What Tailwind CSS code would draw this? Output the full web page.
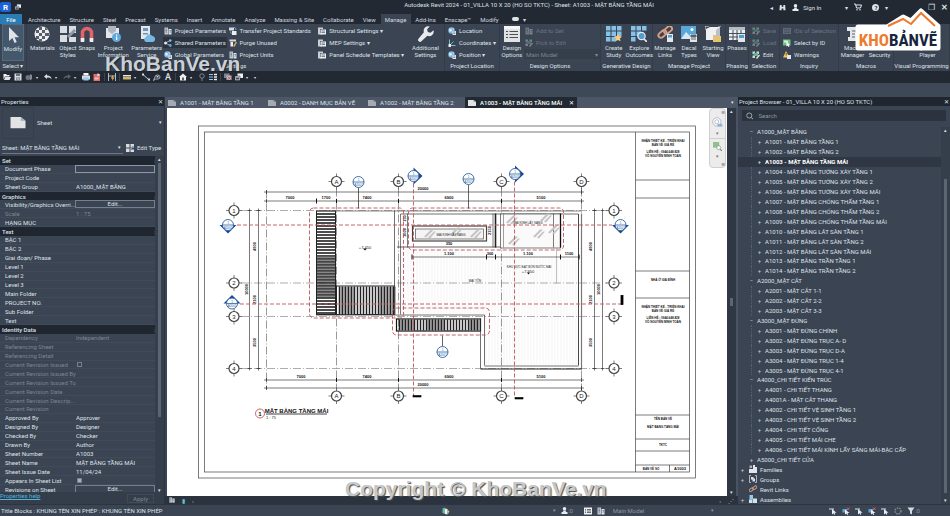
<!DOCTYPE html>
<html lang="vi">
<head>
<meta charset="utf-8">
<title>Autodesk Revit 2024</title>
<script src="https://cdn.jsdelivr.net/npm/@tailwindcss/browser@4"></script>
</head>
<body class="relative flex h-screen flex-col overflow-hidden bg-[#3b4453] font-[Roboto,'Noto_Sans',sans-serif] text-[6px] leading-[7px] text-[#dde1e7]">

<svg class="hidden" xmlns="http://www.w3.org/2000/svg">
  <symbol id="cursor" viewBox="0 0 16 16"><path d="M4 0v14l3.400-3 2.200 5 2.200-1-2.200-4.800H14z" fill="#dfe3e8"/></symbol>
  <symbol id="materials" viewBox="0 0 16 16"><circle cx="8" cy="8" r="7.500" fill="#eceef0"/><path d="M5 1h3v3H5zM11 1l3 3h-3zM2 4h3v3H2zM8 4h3v3H8zM5 7h3v3H5zM11 7h4v3h-4zM2 10h3v3H2zM8 10h3v3H8zM5 13h3v2.500H5z" fill="#565e69"/></symbol>
  <symbol id="styles" viewBox="0 0 16 16"><path d="M0 0h7v7H0zM9 0h7v7H9zM0 9h7v7H0zM9 11h7v5H9z" fill="#d9dde2"/><path d="M7 10l7-7 2 2-7 7z" fill="#8f98a4"/></symbol>
  <symbol id="magnet" viewBox="0 0 16 16"><path d="M3.500 15V7a4.500 4.500 0 0 1 9 0v8" fill="none" stroke="#e2636a" stroke-width="3.600"/><path d="M1.700 12h3.600v4H1.700zM10.700 12h3.600v4h-3.600z" fill="#eceef0"/></symbol>
  <symbol id="info" viewBox="0 0 16 16"><path d="M1 2h13v10H1z" fill="#e4e6ea"/><path d="M3 0h8v5l-4 3-4-3z" fill="#aeb5be"/><circle cx="11.500" cy="11.500" r="4.500" fill="#62a9dc"/><path d="M11 8.500h1.200v1.300H11zM11 10.500h1.200V14H11z" fill="#fff"/></symbol>
  <symbol id="service" viewBox="0 0 16 16"><path d="M2 0h9v13H2z" fill="#e4e6ea"/><path d="M4 2h5v3H4zM4 7h5v1.500H4z" fill="#6896bd"/><path d="M7 16a2.600 2.600 0 0 1 0-5 3.300 3.300 0 0 1 6-1.200A3.200 3.200 0 0 1 14 16z" fill="#78b7e2"/></symbol>
  <symbol id="doc" viewBox="0 0 16 16"><path d="M1 1h7v14H1z" fill="#c3c9d1"/><path d="M9 4h6v11H9z" fill="#e4e6ea"/><path d="M3 4h3M3 7h3M3 10h3M11 7h3M11 10h3" stroke="#5a6370" stroke-width="1.500"/></symbol>
  <symbol id="share" viewBox="0 0 16 16"><path d="M3 8l9-5M3 8l9 5" stroke="#cfd4da" stroke-width="1.500"/><circle cx="3" cy="8" r="3" fill="#e4e6ea"/><circle cx="12.500" cy="3" r="2.500" fill="#8bc2e6"/><circle cx="12.500" cy="13" r="2.800" fill="#5aa6d8"/></symbol>
  <symbol id="globe" viewBox="0 0 16 16"><circle cx="7" cy="7" r="6.500" fill="#79b8e3"/><path d="M3 3l4 1 1 4-4 2-2-3zM9 2l3 2-2 2z" fill="#dcebf5"/><path d="M9 8h7v8H9z" fill="#e4e6ea"/><path d="M10.500 10h4M10.500 13h4" stroke="#5a6370" stroke-width="1.300"/></symbol>
  <symbol id="transfer" viewBox="0 0 16 16"><path d="M0 1h10v6H0z" fill="#d5d9df"/><path d="M6 8h9v8H6z" fill="#eceef0"/><path d="M9 1c4 0 5 2 5 5M3 9c0 3 1 4 3 4" stroke="#79b8e3" stroke-width="1.800" fill="none"/></symbol>
  <symbol id="purge" viewBox="0 0 16 16"><path d="M1 1h13v4H1z" fill="#d5d9df"/><path d="M3 6h5v9H3z" fill="#eceef0"/><path d="M8 14l6-9 2 2-5 9z" fill="#d9a35f"/></symbol>
  <symbol id="struct" viewBox="0 0 16 16"><path d="M0 1h10v3H0zM0 12h8v3H0zM0 4h4v8H0z" fill="#c9ced6"/><path d="M5 5h11v10H5z" fill="#eceef0"/><path d="M7 8h7M7 11h7" stroke="#4b5461" stroke-width="1.400"/></symbol>
  <symbol id="wrench" viewBox="0 0 16 16"><path d="M15.500 4.200l-3 2.500-2.700-.6-.7-2.800L11.700.5a4.600 4.600 0 0 0-5.800 5.800L.7 12.600a1.900 1.900 0 0 0 2.700 2.700l6-5.500a4.600 4.600 0 0 0 6.100-5.600z" fill="#e8eaed"/></symbol>
  <symbol id="axes" viewBox="0 0 16 16"><path d="M3 1v12h12" stroke="#78b7e2" stroke-width="2" fill="none"/><path d="M3 13l8-8" stroke="#6ec58b" stroke-width="2"/><path d="M1 10h5v6H1z" fill="#eceef0"/></symbol>
  <symbol id="options" viewBox="0 0 16 16"><path d="M0 0h16v16H0z" fill="#e2e3e3"/><path d="M0 0h16v3H0z" fill="#f6f6f4"/><path d="M2 5.500h2M2 8.500h2M2 11.500h2M5.500 5.500H14M5.500 8.500H14M5.500 11.500H14" stroke="#454e5a" stroke-width="1.200"/></symbol>
  <symbol id="study" viewBox="0 0 16 16"><path d="M0 0h4.500v4.500H0zM5.500 0H10v4.500H5.500zM11 0h4.500v4.500H11zM0 5.500h4.500V10H0zM5.500 5.500H10V10H5.500zM11 5.500h4.500V10H11zM0 11h4.500v4.500H0zM5.500 11H10v4.500H5.500z" fill="#86c1ea"/><path d="M12 7.500l1.200 2.600 2.800.4-2 1.900.5 2.900-2.500-1.400-2.500 1.400.5-2.900-2-1.900 2.800-.4z" fill="#f2cf84"/></symbol>
  <symbol id="explore" viewBox="0 0 16 16"><path d="M0 0h4.500v4.500H0zM5.500 0H10v4.500H5.500zM11 0h4.500v4.500H11zM0 5.500h4.500V10H0zM5.500 5.500H10V10H5.500zM0 11h4.500v4.500H0z" fill="#86c1ea"/><circle cx="10.500" cy="10" r="3.700" fill="#4f9ed1" stroke="#e8eaed" stroke-width="1.200"/><path d="M13 13l3 3" stroke="#e8eaed" stroke-width="1.700"/></symbol>
  <symbol id="links" viewBox="0 0 16 16"><g fill="none" stroke="#d8a184" stroke-width="1.900"><rect x="1" y="5.500" width="9" height="5" rx="2.500" transform="rotate(-40 5.500 8)"/><rect x="6.500" y="1.500" width="9" height="5" rx="2.500" transform="rotate(-40 11 4)"/></g><path d="M10 8h6v8h-6z" fill="#e4e6ea"/><path d="M11 9h4v2.500h-4z" fill="#4f9ed1"/></symbol>
  <symbol id="chain" viewBox="0 0 16 16"><g fill="none" stroke="#c9a184" stroke-width="1.900"><rect x="0" y="7" width="9" height="5" rx="2.500" transform="rotate(-35 4.500 9.500)"/><rect x="7" y="3" width="9" height="5" rx="2.500" transform="rotate(-35 11.500 5.500)"/></g></symbol>
  <symbol id="decal" viewBox="0 0 16 16"><path d="M0 0h15v13H0z" fill="#58a8dc"/><path d="M0 13l5-7 4 4 2-2 4 5z" fill="#d5e7f3"/><circle cx="11" cy="3.500" r="1.500" fill="#fff"/><path d="M9 8h7v8H9z" fill="#e4e6ea"/><path d="M10 9h5v2h-5zM10 13h5" fill="#5a6370" stroke="#5a6370"/></symbol>
  <symbol id="start" viewBox="0 0 16 16"><path d="M1 3l4-2h10v10l-4 3H1z" fill="#f0f1f2"/><path d="M11 4l4-3v10l-4 3z" fill="#b9c0c8"/><path d="M0 0h4M0 0v4M16 0h-3" stroke="#dfe3e8"/><path d="M8 9h3l1 1h4v6H8z" fill="#e5c374"/></symbol>
  <symbol id="phases" viewBox="0 0 16 16"><path d="M0 1h16v13H0z" fill="#eceef0"/><path d="M0 1h16v3H0z" fill="#b4bbc4"/><path d="M0 7.500h16M0 11h16M4 4v10M8 4v10M12 4v10" stroke="#454e5a"/><path d="M9 8h7v8H9z" fill="#e4e6ea"/><path d="M10 9h5v3h-5z" fill="#4f9ed1"/></symbol>
  <symbol id="scroll" viewBox="0 0 16 16"><path d="M2 1h12v4h-2v10H3v-4h2V5H2z" fill="#e4e6ea"/><path d="M7 5h4M7 8h3M7 11h3" stroke="#5a6370"/></symbol>
  <symbol id="play" viewBox="0 0 16 16"><path d="M0 2h14v12H0z" fill="#4fbf77"/><path d="M5 5l6 3-6 3z" fill="#fff"/></symbol>
  <symbol id="ids" viewBox="0 0 16 16"><path d="M0 2h16v12H0z" fill="#9aa1ab"/><path d="M2 5h12M2 8h12M2 11h12" stroke="#3b4453"/></symbol>
  <symbol id="selid" viewBox="0 0 16 16"><path d="M0 1h15v12H0z" fill="#6fc283"/><path d="M2 3h8v4H2z" fill="#d9efdd"/><path d="M7 5v10l2.500-2 1.500 3 2-1-1.500-3H14z" fill="#fff"/></symbol>
  <symbol id="warn" viewBox="0 0 16 16"><path d="M6 0l7 13H0z" fill="#f0c95c"/><path d="M5.500 4h1.500v5H5.500z" fill="#4b3a12"/><path d="M8 8h8v8H8z" fill="#e4e6ea"/></symbol>
  <symbol id="edit" viewBox="0 0 16 16"><path d="M1 1h5v5H1zM9 1h5v5H9zM1 9h5v5H1z" fill="#d5d9df"/><path d="M3 4h9v6H3z" fill="#5fb98a"/><path d="M8 14l6-7 2 2-6 7z" fill="#e8eaed"/></symbol>
  <symbol id="open" viewBox="0 0 16 16"><path d="M1 2h5l2 2h5v3H4l-3 6z" fill="#f3f4f5"/><path d="M4.500 8H16l-3 6H2z" fill="#e3e5e8"/></symbol>
  <symbol id="save" viewBox="0 0 16 16"><path d="M1 1h14v14H1z" fill="#d7dbe0"/><path d="M4 1h8v5H4zM4 9h8v6H4z" fill="#69717d"/><path d="M5 11h6M5 13h6" stroke="#eee"/></symbol>
  <symbol id="sync" viewBox="0 0 16 16"><circle cx="6" cy="9" r="5" fill="#6d7580"/><path d="M10 2l4 2v8l-4 3z" fill="#838b96"/></symbol>
  <symbol id="undo" viewBox="0 0 16 16"><path d="M6 2L0 7l6 5V9c4-.5 7 0 9 4 0-6-4-8-9-8z" fill="currentColor"/></symbol>
  <symbol id="print" viewBox="0 0 16 16"><path d="M3 0h10v5H3z" fill="#f5f5f5"/><path d="M0 5h16v8H0z" fill="#dadde1"/><path d="M3 9h10v6H3z" fill="#8ecbee"/></symbol>
  <symbol id="pdf" viewBox="0 0 16 16"><path d="M1 2h10l3 3v11H1z" fill="#e06c6c"/><path d="M9 0l6 4-6 3z" fill="#dfe3e8"/><path d="M3 9h8v4H3z" fill="#f3c0c0"/></symbol>
  <symbol id="dim" viewBox="0 0 16 16"><path d="M1 0v16M15 0v16M1 6h14" stroke="#d5d9df" stroke-width="1.600"/><path d="M9 5l-3 6h3l-1 5 5-7H9l2-4z" fill="#efc15e"/></symbol>
  <symbol id="ruler" viewBox="0 0 16 16"><path d="M0 4h16v3H0z" fill="#e4e6ea"/><path d="M0 8h16v5H0z" fill="#d3b36a"/></symbol>
  <symbol id="align" viewBox="0 0 16 16"><path d="M2 3l11 10" stroke="#a9cfe8" stroke-width="2"/><path d="M0 1h4v4H0zM12 11h4v4h-4z" fill="#d5d9df"/></symbol>
  <symbol id="tag" viewBox="0 0 16 16"><path d="M4 8a5 4 0 1 1 6 4H5l-4 3z" fill="none" stroke="#cdd2d9" stroke-width="1.600"/><path d="M7 6h4v3H7z" fill="#cdd2d9"/></symbol>
  <symbol id="home" viewBox="0 0 16 16"><path d="M8 1L0 8h2v7h12V8h2z" fill="#eceef0"/><path d="M6 9h4v6H6z" fill="#59616d"/></symbol>
  <symbol id="pin" viewBox="0 0 16 16"><circle cx="8" cy="6" r="4.500" fill="none" stroke="#8d95a0" stroke-width="1.600"/><path d="M8 10v6" stroke="#8d95a0" stroke-width="1.600"/></symbol>
  <symbol id="thin" viewBox="0 0 16 16"><path d="M0 3h8M0 8h8M0 13h8" stroke="#8ecbee" stroke-width="2"/><path d="M10 3h6M10 8h6M10 13h6" stroke="#eceef0" stroke-width="3"/></symbol>
  <symbol id="close" viewBox="0 0 16 16"><path d="M0 1h11v9H0z" fill="#7b8490"/><path d="M5 5h10v9H5z" fill="#b7bdc6"/><path d="M7 7l7 7M14 7l-7 7" stroke="#d95a5a" stroke-width="2"/></symbol>
  <symbol id="windows" viewBox="0 0 16 16"><path d="M5 1h11v9H5z" fill="#eceef0"/><path d="M0 6h10v9H0z" fill="#cfd3d9" stroke="#222933"/><path d="M2 9h6v4H2z" fill="#444c58"/></symbol>
  <symbol id="sheet" viewBox="0 0 16 16"><path d="M0 2h11l5 4v8H0z" fill="#e2e3e5"/><path d="M11 2v4h5z" fill="#a3a9b2"/></symbol>
  <symbol id="filter" viewBox="0 0 16 16"><path d="M1 1h14L10 8v7l-4-2V8z" fill="#d5d9df"/></symbol>
  <symbol id="person" viewBox="0 0 16 16"><circle cx="8" cy="4" r="4" fill="#e8eaed"/><path d="M5 8h6v3l4 1v4H1v-4l4-1z" fill="#e8eaed"/></symbol>
  <symbol id="cart" viewBox="0 0 16 16"><path d="M0 2h3l2 8h8l2-6H4" fill="none" stroke="#e8eaed" stroke-width="2"/><circle cx="6" cy="13.500" r="1.500" fill="#e8eaed"/><circle cx="12" cy="13.500" r="1.500" fill="#e8eaed"/></symbol>
  <symbol id="binoc" viewBox="0 0 16 16"><path d="M2 2h4v4h4V2h4l1 12h-5v-4H6v4H1z" fill="#dfe3e8"/></symbol>
  <symbol id="pick" viewBox="0 0 16 16"><path d="M0 2h10v4H0z" fill="#8d95a0"/><path d="M6 4v11l3-2.500 1.500 3 2-1-1.500-3h4z" fill="#eceef0"/></symbol>
  <symbol id="pickx" viewBox="0 0 16 16"><path d="M1 4h9v7H1z" fill="#5aa6d8"/><path d="M6 5v10l3-2 1.500 3 2-1-1.500-3h4z" fill="#eceef0"/><path d="M10 1l5 5M15 1l-5 5" stroke="#dd5b5b" stroke-width="2"/></symbol>
  <symbol id="spin" viewBox="0 0 16 16"><circle cx="8" cy="8" r="6" fill="none" stroke="#8d95a0" stroke-width="2.500" stroke-dasharray="3 2"/></symbol>
  <symbol id="model" viewBox="0 0 16 16"><path d="M1 3l5-2v13l-5-2z" fill="#5fc0b0"/><path d="M6 3l5 1v11l-5-1z" fill="#eceef0"/><path d="M10 6l5 2-3 6z" fill="#efc15e"/></symbol>
  <symbol id="list" viewBox="0 0 16 16"><path d="M0 1h16v14H0z" fill="#eceef0"/><path d="M2 5h2M2 8h2M2 11h2M6 5h8M6 8h8M6 11h8" stroke="#3b4453" stroke-width="1.500"/></symbol>
  <symbol id="search" viewBox="0 0 16 16"><circle cx="7" cy="7" r="5.500" fill="none" stroke="#c9ced6" stroke-width="1.500"/><path d="M11 11l4.500 4.500" stroke="#c9ced6" stroke-width="2"/></symbol>
  <symbol id="families" viewBox="0 0 16 16"><path d="M0 8h8V0h4v16H0zM8 4h8v12H8z" fill="#e4e6ea"/><path d="M1 1h5v5H1z" fill="#aab1bb"/></symbol>
  <symbol id="groups" viewBox="0 0 16 16"><path d="M4 1H1v14h3M12 1h3v14h-3" fill="none" stroke="#d5d9df" stroke-width="1.500"/><path d="M4 4h5v5H4zM7 7h5v6H7z" fill="#dfe3e8"/></symbol>
  <symbol id="assembly" viewBox="0 0 16 16"><path d="M1 0h7v9H1z" fill="#8ecbee"/><path d="M0 9h7v7H0zM8 7h8v9H8z" fill="#d5e2ec"/></symbol>
  <symbol id="chev" viewBox="0 0 16 16"><path d="M3 7l5-5 5 5M3 14l5-5 5 5" fill="none" stroke="#e4e6ea" stroke-width="2.500"/></symbol>
</svg>

<!-- Title bar -->
<header class="relative flex h-[14px] shrink-0 items-center bg-[#222933]">
  <span class="flex h-[10px] w-[11px] items-center justify-center rounded-xs bg-[#1c63d8] text-[8px] font-bold text-white">R</span>
  <svg class="ml-1 size-[6px]"><use href="#windows"/></svg>
  <h1 class="absolute inset-x-0 -top-px pl-[108px] text-center leading-[12px]">Autodesk Revit 2024 - 01_VILLA 10 X 20 (HO SO TKTC) - Sheet: A1003 - MẶT BẰNG TẦNG MÁI</h1>
  <div class="ml-auto flex items-center gap-[6px] pr-[2px]">
    <span>◂</span><svg class="size-[7px]"><use href="#binoc"/></svg>
    <button class="flex items-center gap-1"><svg class="size-[7px]"><use href="#person"/></svg>Sign In</button>
    <span class="ml-[18px]">▾</span><svg class="size-[8px]"><use href="#cart"/></svg>
    <button class="ml-1 size-[7px] rounded-full bg-[#dfe3e8] font-bold text-[#1f2630]">?</button><span>▾</span>
    <button class="ml-6 text-[8px] font-bold">_</button><button class="text-[8px]" aria-label="Restore">❐</button><button class="text-[8px] font-bold" aria-label="Close">✕</button>
  </div>
</header>

<!-- Ribbon tabs -->
<nav id="menu" class="flex h-[10px] shrink-0 items-stretch bg-[#222933] text-[#d5d9e0]"></nav>

<!-- Ribbon -->
<section id="ribbon" class="grid h-[47px] shrink-0 grid-cols-[27fr_418fr_55fr_101fr_52fr_73fr_23fr_31fr_59fr_55fr_56fr] bg-[#3b4453] text-center">
</section>

<!-- Quick access toolbar -->
<nav id="qat" class="flex h-[12px] shrink-0 items-center gap-[3px] bg-[#222933] px-[3px]" aria-label="Quick access"></nav>
<div class="h-[14px] shrink-0 bg-[#3f4857]"></div>

<!-- Work area -->
<main class="grid min-h-0 flex-1 grid-cols-[165fr_573fr_212fr]">

  <section class="flex min-h-0 min-w-0 flex-col border-r border-[#2c3440] bg-[#3b4453]">
    <h2 class="flex h-[9px] shrink-0 items-center justify-between bg-[#1f2630] px-px">Properties<button aria-label="Close properties">✕</button></h2>
    <div class="flex h-[33px] shrink-0 items-center gap-[3px] px-[2px]">
      <div class="flex size-[32px] items-center justify-center border border-[#353e4b]"><svg class="h-[15px] w-4"><use href="#sheet"/></svg></div>
      <span>Sheet</span><span class="ml-auto text-[5px]">▾</span>
    </div>
    <div class="flex h-[17px] shrink-0 items-center gap-[3px] px-[2px]">
      <div class="relative flex-1 border-b border-[#6f7885]">
        <select aria-label="Sheet" class="h-[11px] w-full appearance-none"><option>Sheet: MẶT BẰNG TẦNG MÁI</option></select>
        <span class="absolute top-[2px] right-[2px] text-[5px]">▾</span>
      </div>
      <button class="flex w-[36px] items-center gap-[3px] whitespace-nowrap"><svg class="size-[8px] shrink-0"><use href="#styles"/></svg>Edit Type</button>
    </div>
    <div class="flex min-h-0 flex-1">
      <div id="props" class="grid min-w-0 flex-1 auto-rows-fr"></div>
      <div class="flex w-[9px] flex-col items-center justify-between bg-[#353e4b] text-[5px]"><span>▴</span><i class="mb-auto h-3/4 w-[3px] bg-[#5b6573]"></i><span>▾</span></div>
    </div>
    <div class="relative -mt-[2px] flex h-[12px] shrink-0 items-center justify-between bg-[#343d4a]">
      <a href="#" class="self-start text-[#4fb3dc] underline">Properties help</a>
      <button class="mr-[10px] h-[9px] w-[27px] border border-[#414a58] text-[#7d8692]">Apply</button>
    </div>
  </section>

  <section class="flex min-h-0 min-w-0 flex-col">
    <div id="docs" class="flex h-[11px] shrink-0 items-stretch bg-[#4c5667]"></div>
    <div class="flex min-h-0 flex-1">
      <div class="relative ml-[2px] min-w-0 flex-1 bg-white">
        <svg id="plan" class="block size-full" viewBox="167 108 560 387" font-family="Liberation Sans, Arial, sans-serif" fill="none" stroke-width="1"></svg>
        <div class="absolute top-0 right-px flex w-[17px] flex-col items-center gap-[3px] rounded-sm border border-[#cfcfcf] bg-[#ececec] py-px text-[5px] text-[#777]">
          <span class="self-end leading-[4px]">⊗</span>
          <svg class="size-[11px]" viewBox="0 0 16 16"><circle cx="7" cy="7" r="6" fill="#fff" stroke="#9ba3ad"/><circle cx="7" cy="7" r="3" fill="none" stroke="#9ba3ad"/><path d="M8 10h7v4H8z" fill="#8fb3d8"/></svg>
          <span class="leading-[4px]">▾</span>
          <i class="h-px w-full bg-[#cfcfcf]"></i>
          <svg class="size-[9px]" viewBox="0 0 16 16"><path d="M0 0h11v10H0z" fill="#8fc28b"/><circle cx="10" cy="10" r="3.500" fill="#fff" stroke="#777"/><path d="M13 13l3 3" stroke="#777" stroke-width="2"/></svg>
          <span class="leading-[5px]">▾</span>
          <span class="self-end leading-[4px]">⊗</span>
        </div>
      </div>
      <div class="flex w-[9px] flex-col items-center justify-between bg-[#2f3744] text-[5px]"><span>▴</span><i class="h-2 w-[3px] bg-[#5b6573]"></i><span>▾</span></div>
      <div class="w-[2px] bg-[#4a5362]"></div>
    </div>
    <div class="flex h-[8px] shrink-0 items-center gap-[7px] bg-[#2b333f] px-[4px] text-[#aab1bb]">
      <svg class="size-[6px]"><use href="#doc"/></svg><span class="text-[#65bfd0]">▮</span><span>‹</span>
      <span class="ml-auto">›</span><span>⋰</span>
    </div>
  </section>

  <section class="flex min-h-0 min-w-0 flex-col bg-[#3b4453]">
    <h2 class="flex h-[9px] shrink-0 items-center justify-between bg-[#1f2630] px-px">Project Browser - 01_VILLA 10 X 20 (HO SO TKTC)<button aria-label="Close browser">✕</button></h2>
    <label class="mx-[4px] mt-[4px] flex h-[11px] shrink-0 items-center gap-[5px] bg-[#2b333f] px-[4px]">
      <svg class="size-[8px]"><use href="#search"/></svg>
      <input type="search" placeholder="Search" class="w-full placeholder:text-[#8d95a0]">
    </label>
    <div class="mt-[6px] flex min-h-0 flex-1">
      <ul id="tree" class="grid min-w-0 flex-1 auto-rows-fr"></ul>
      <div class="flex w-[9px] flex-col items-center justify-between bg-[#353e4b] text-[5px]"><span>▴</span><i class="mt-auto mb-1 h-5/6 w-[3px] bg-[#5b6573]"></i><span>▾</span></div>
    </div>
  </section>
</main>

<!-- Status bar -->
<footer class="grid h-[12px] shrink-0 grid-cols-[442fr_111fr_276fr_121fr] items-center border-t border-[#2c3440] bg-[#3b4453]">
  <span class="pl-px">Title Blocks : KHUNG TÊN XIN PHÉP : KHUNG TÊN XIN PHÉP</span>
  <svg class="size-[8px]"><use href="#model"/></svg>
  <div class="flex items-center gap-[5px] text-[#8d95a0]">
    <span class="text-[5px]">▾</span><span class="flex items-center"><svg class="size-[7px]"><use href="#person"/></svg>:0</span>
    <svg class="ml-[6px] size-[8px]"><use href="#list"/></svg><svg class="size-[8px]"><use href="#doc"/></svg>
    <label class="flex w-[104px] items-center pl-[3px]"><select aria-label="Active option" class="w-full appearance-none"><option>Main Model</option></select><span class="text-[5px]">▾</span></label>
  </div>
  <div class="flex items-center gap-[5px]">
    <svg class="size-[8px]"><use href="#pick"/></svg><svg class="size-[8px]"><use href="#pickx"/></svg><svg class="size-[8px]"><use href="#pick"/></svg><svg class="size-[8px]"><use href="#pickx"/></svg><svg class="size-[8px]"><use href="#pick"/></svg><svg class="size-[8px]"><use href="#spin"/></svg><span class="flex items-center text-[#8d95a0]"><svg class="size-[8px]"><use href="#filter"/></svg>:0</span>
  </div>
</footer>

<!-- Brand overlays -->
<svg class="absolute top-[8px] right-[6px] h-[46px] w-[94px]" viewBox="850 8 94 46" font-family="'Liberation Sans Narrow','Roboto Condensed','Open Sans Condensed','DejaVu Sans Condensed',sans-serif">
  <path d="M858 27h29l16-10 8 4 10-10 17 15v22h-80z" fill="#fff" stroke="#fff" stroke-width="5" stroke-linejoin="round"/>
  <path d="M888 26l15-7 8 5 10-11 14 13" fill="none" stroke="#ee7a2d" stroke-width="2"/>
  <text x="898" y="46" font-size="17" font-weight="700" fill="#ee7a2d" text-anchor="middle">KHO<tspan fill="#16253c">BẢNVẼ</tspan></text>
</svg>
<p class="absolute top-[53px] left-[105px] font-['Liberation_Sans',Arial,sans-serif] text-[21px] leading-[21px] font-bold text-[#c9d0d8] [text-shadow:1px_1px_1px_#1a1f28]">KhoBanVe.vn</p>
<p class="absolute bottom-[17px] left-[345px] font-['Liberation_Sans',Arial,sans-serif] text-[21px] leading-[21px] font-bold text-[#c3c8cd] [text-shadow:1px_1px_1px_#4a4a4a]">Copyright © KhoBanVe.vn</p>

<script>
const $ = id => document.getElementById(id);
const icon = (name, cls) => `<svg class="${cls}"><use href="#${name}"/></svg>`;

$('menu').innerHTML = `<button class="mr-[2px] w-[22px] bg-[#2a7cb4] text-white">File</button>` +
  'Architecture,Structure,Steel,Precast,Systems,Insert,Annotate,Analyze,Massing & Site,Collaborate,View,Manage,Add-Ins,Enscape™,Modify'.split(',')
  .map(t => `<button class="${t === 'Manage' ? 'bg-[#3b4453] pr-[5px] pl-[4px]' : 'pr-[5px] pl-[4px]'}">${t}</button>`).join('') +
  `<span class="ml-2 flex items-center gap-1"><i class="h-1 w-[7px] rounded-xs bg-[#dfe3e8]"></i>▾</span>`;

const big = (ic, label) => `<button class="flex flex-col items-center gap-[2px] pt-[2px]">${icon(ic, 'size-4 shrink-0')}<span class="whitespace-pre">${label}</span></button>`;
const small = (ic, label, cls = '') => `<button class="flex h-[11px] items-center gap-[3px] px-px whitespace-nowrap ${cls}">${icon(ic, 'size-[8px] shrink-0')}${label}</button>`;
const stack = (...b) => `<div class="flex min-w-0 flex-col items-start gap-px pt-px">${b.join('')}</div>`;
const group = (label, cols, body) => `<div class="flex min-w-0 flex-col border-r border-[#343c49]"><div class="grid h-[37px] ${cols}">${body}</div><div class="pt-px whitespace-nowrap">${label}</div></div>`;
const off = 'text-[#6b7481] [&>svg]:opacity-40';
$('ribbon').innerHTML =
  group('Select ▾', 'grid-cols-1 mx-[2px] bg-[#45576a] border border-[#506b80]', big('cursor', 'Modify')) +
  group('Settings', 'grid-cols-[31fr_20fr_18fr_35fr_32fr_65fr_90fr_90fr_37fr]',
    big('materials', 'Materials') + big('styles', 'Object\nStyles') + big('magnet', 'Snaps') + big('info', 'Project\nInformation') + big('service', 'Parameters\nService') +
    stack(small('doc', 'Project Parameters'), small('share', 'Shared Parameters', 'bg-[#2b333f]'), small('globe', 'Global Parameters')) +
    stack(small('transfer', 'Transfer Project Standards'), small('purge', 'Purge Unused'), small('doc', 'Project Units')) +
    stack(small('struct', 'Structural Settings ▾'), small('struct', 'MEP Settings ▾'), small('struct', 'Panel Schedule Templates ▾')) +
    big('wrench', 'Additional\nSettings')) +
  group('Project Location', 'grid-cols-1 pl-[2px]', stack(small('globe', 'Location'), small('axes', 'Coordinates ▾'), small('globe', 'Position ▾'))) +
  group('Design Options', 'grid-cols-[24fr_76fr]', big('options', 'Design\nOptions') +
    stack(small('doc', 'Add to Set', off), small('edit', 'Pick to Edit', off), `<label class="flex h-[10px] w-full items-center bg-[#353e4b] px-[2px] text-[#7d8692]"><select aria-label="Design option" class="w-full appearance-none"><option>Main Model</option></select>▾</label>`)) +
  group('Generative Design', 'grid-cols-2', big('study', 'Create\nStudy') + big('explore', 'Explore\nOutcomes')) +
  group('Manage Project', 'grid-cols-3', big('links', 'Manage\nLinks') + big('decal', 'Decal\nTypes') + big('start', 'Starting\nView')) +
  group('Phasing', 'grid-cols-1', big('phases', 'Phases')) +
  group('Selection', 'grid-cols-1 pl-[2px]', stack(small('edit', 'Save', off), small('edit', 'Load', off), small('edit', 'Edit'))) +
  group('Inquiry', 'grid-cols-1 pl-[2px]', stack(small('ids', 'IDs of Selection', off), small('selid', 'Select by ID'), small('warn', 'Warnings'))) +
  group('Macros', 'grid-cols-2', big('scroll', 'Macro\nManager') + big('scroll', 'Macro\nSecurity')) +
  group('Visual Programming', 'grid-cols-[12fr_44fr]', '<span></span>' + big('play', 'Dynamo\nPlayer'));

$('qat').innerHTML = 'open save sync ▾ undo ▾ redo ▾ print pdf | dim | ruler ▾ align tag A | home ▾ pin thin | close windows ▾ ▾'.split(' ').map(n =>
  n === '|' ? '<i class="h-[8px] w-px bg-[#3b4453]"></i>' :
  n === '▾' ? '<span class="w-[5px] text-[4px]">▾</span>' :
  n === 'A' ? '<button class="w-[8px] text-[9px] font-medium">A</button>' :
  n === 'redo' ? `<button class="text-[#59616d]" aria-label="redo">${icon('undo', 'size-[8px] -scale-x-100')}</button>` :
  `<button aria-label="${n}">${icon(n, 'size-[8px]')}</button>`).join('');

$('docs').innerHTML = ['A1001 - MẶT BẰNG TẦNG 1', 'A0002 - DANH MỤC BẢN VẼ', 'A1002 - MẶT BẰNG TẦNG 2', 'A1003 - MẶT BẰNG TẦNG MÁI']
  .map((t, i) => `<button class="${i === 3 ? 'flex w-[112px] items-center gap-1 bg-[#222933] px-[3px] font-medium text-white' : 'flex w-[100px] items-center gap-1 px-[3px]'}">${icon('sheet', i === 3 ? 'size-[8px]' : 'size-[8px] opacity-60')}${t}${i === 3 ? '<span class="ml-auto">✕</span>' : ''}</button>`).join('') +
  '<span class="ml-auto pt-[2px] pr-[4px] text-[5px]">▾</span>';

/* Property rows: [label, value, kind]; kind: h header, d disabled, b button, c/k tick box, f focused, n plain */
const P = [['Set',,'h'],['Document Phase','','f'],['Project Code',''],['Sheet Group','A1000_MẶT BẰNG'],
 ['Graphics',,'h'],['Visibility/Graphics Overri...','Edit...','b'],['Scale','1 : 75','d'],['HẠNG MỤC',''],
 ['Text',,'h'],['BẬC 1',''],['BẬC 2',''],['Giai đoạn/ Phase',''],['Level 1',''],['Level 2',''],['Level 3',''],['Main Folder',''],['PROJECT NO.',''],['Sub Folder',''],['Text',''],
 ['Identity Data',,'h'],['Dependency','Independent','d'],['Referencing Sheet','','d'],['Referencing Detail','','d'],['Current Revision Issued','','c'],['Current Revision Issued By','','d'],['Current Revision Issued To','','d'],['Current Revision Date','','d'],['Current Revision Descrip...','','d'],['Current Revision','','d'],
 ['Approved By','Approver','n'],['Designed By','Designer','n'],['Checked By','Checker','n'],['Drawn By','Author','n'],['Sheet Number','A1003','n'],['Sheet Name','MẶT BẰNG TẦNG MÁI','n'],['Sheet Issue Date','11/04/24','n'],['Appears In Sheet List','','k'],['Revisions on Sheet','Edit...','b']];
$('props').innerHTML = P.map(([l, v, k], i) => {
  if (k === 'h') return `<button class="flex min-h-0 items-center justify-between bg-[#1f2630] px-[2px] text-left font-medium">${l}${icon('chev', 'size-[5px]')}</button>`;
  const dis = k === 'd' || k === 'c';
  const field = k === 'b' ? `<button id="p${i}" class="h-[8px] min-w-0 flex-1 border border-[#75808e] leading-[6px]">${v}</button>`
    : k === 'c' || k === 'k' ? `<span class="flex flex-1 items-center pl-[2px]"><input id="p${i}" type="checkbox" ${k === 'k' ? 'checked' : 'disabled'} class="size-[5px] appearance-none border border-[#75808e] checked:bg-[#aab1bb]"></span>`
    : `<input id="p${i}" value="${v}" class="${k === 'f' ? 'h-[8px] min-w-0 flex-1 border border-[#8d97a4] px-px' : 'h-[8px] min-w-0 flex-1 px-px'}">`;
  const box = k === undefined || k === 'f' ? '<i class="mr-px h-[7px] w-[4px] shrink-0 border border-[#5b6573]"></i>' : '<i class="w-[5px] shrink-0"></i>';
  return `<div class="flex min-h-0 items-center gap-px border-b border-[#414a59] ${dis ? 'text-[#7b8490]' : ''}"><label for="p${i}" class="w-[74px] shrink-0 pl-[5px] whitespace-nowrap">${l}</label>${field}${box}</div>`;
}).join('');

const T = `-A1000_MẶT BẰNG|A1001 - MẶT BẰNG TẦNG 1|A1002 - MẶT BẰNG TẦNG 2|A1003 - MẶT BẰNG TẦNG MÁI|A1004 - MẶT BẰNG TƯỜNG XÂY TẦNG 1|A1005 - MẶT BẰNG TƯỜNG XÂY TẦNG 2|A1006 - MẶT BẰNG TƯỜNG XÂY TẦNG MÁI|A1007 - MẶT BẰNG CHỐNG THẤM TẦNG 1|A1008 - MẶT BẰNG CHỐNG THẤM TẦNG 2|A1009 - MẶT BẰNG CHỐNG THẤM TẦNG MÁI|A1010 - MẶT BẰNG LÁT SÀN TẦNG 1|A1011 - MẶT BẰNG LÁT SÀN TẦNG 2|A1012 - MẶT BẰNG LÁT SÀN TẦNG MÁI|A1013 - MẶT BẰNG TRẦN TẦNG 1|A1014 - MẶT BẰNG TRẦN TẦNG 2|-A2000_MẶT CẮT|A2001 - MẶT CẮT 1-1|A2002 - MẶT CẮT 2-2|A2003 - MẶT CẮT 3-3|-A3000_MẶT ĐỨNG|A3001 - MẶT ĐỨNG CHÍNH|A3002 - MẶT ĐỨNG TRỤC A- D|A3003 - MẶT ĐỨNG TRỤC D-A|A3004 - MẶT ĐỨNG TRỤC 1-4|A3005 - MẶT ĐỨNG TRỤC 4-1|-A4000_CHI TIẾT KIẾN TRÚC|A4001 - CHI TIẾT THANG|A4001A - MẶT CẮT THANG|A4002 - CHI TIẾT VỆ SINH TẦNG 1|A4003 - CHI TIẾT VỆ SINH TẦNG 2|A4004 - CHI TIẾT CỔNG|A4005 - CHI TIẾT MÁI CHE|A4006 - CHI TIẾT MÁI KÍNH LẤY SÁNG MÁI-BẬC CẤP|+A5000_CHI TIẾT CỬA|families:Families|groups:Groups|chain:Revit Links|assembly:Assemblies`;
$('tree').innerHTML = T.split('|').map(s => {
  const row = (cls, sign, ic, text) => `<li class="flex min-h-0 items-center gap-[3px] whitespace-nowrap ${cls}"><button class="w-[5px] text-[#c3c9d2]">${sign}</button>${ic}<span>${text}</span></li>`;
  if (s.includes(':')) { const [ic, t] = s.split(':'); return row('pl-[2px]', ic === 'chain' ? '' : '+', icon(ic, 'ml-px size-[8px]'), t); }
  if (s[0] === '-' || s[0] === '+') return row('pl-[11px]', s[0] === '-' ? '−' : '+', '', s.slice(1));
  return row(s.startsWith('A1003') ? 'bg-[#2f3744] pl-[19px] font-bold text-white' : 'ml-[13px] border-l border-dotted border-[#566070] pl-[5px]', '+', '', s);
}).join('');

/* Roof plan drawing */
const out = [];
const L = (x1, y1, x2, y2, c = '#444', w = .7, d = '') => out.push(`<path d="M${x1} ${y1}L${x2} ${y2}" stroke="${c}" stroke-width="${w}" stroke-dasharray="${d}"/>`);
const R = (x, y, x2, y2, c = '#444', w = .7, f = 'none', extra = '') => out.push(`<rect x="${x}" y="${y}" width="${x2 - x}" height="${y2 - y}" stroke="${c}" stroke-width="${w}" fill="${f}" ${extra}/>`);
const t = (x, y, s, size = 4, c = '#222', extra = '') => out.push(`<text x="${x}" y="${y}" font-size="${size}" fill="${c}" text-anchor="middle" ${extra}>${s}</text>`);
const bold = 'font-weight="700"';
const v = (x, y, s) => t(x, y, s, 4, '#111', `${bold} transform="rotate(-90 ${x} ${y})"`);

R(198.5, 125.5, 695.5, 477.5); R(204.5, 131.5, 689.5, 471.5);
L(635.5, 131.5, 635.5, 471.5);
[179.5, 197.5, 270.5, 297.5, 414.5, 438.5, 450.5, 464.5].forEach(y => L(635.5, y, 689.5, y));
L(669.5, 464.5, 669.5, 471.5);
[138, 304].forEach(y => {
  t(663, y + 3, 'NHẬN THIẾT KẾ - TRIỂN KHAI', 3, '#111', bold); t(663, y + 7, 'BẢN VẼ GIÁ RẺ', 3, '#111', bold);
  t(663, y + 14, 'LIÊN HỆ : 0944.648.828', 3, '#111', bold); t(663, y + 18, 'VÕ NGUYÊN MINH TOÀN', 3, '#111', bold);
});
t(663, 280, 'NHÀ Ở GIA ĐÌNH', 3, '#111', bold); t(663, 419, 'TÊN BẢN VẼ', 3, '#111', bold);
t(663, 427, 'MẶT BẰNG TẦNG MÁI', 3, '#111', bold); t(663, 445, 'TKTC', 3, '#111', bold);
t(651, 469, 'BẢN VẼ SỐ', 3, '#111', bold); t(680, 469, 'A1003', 4, '#111', bold);

/* roof sheet with light ribs */
for (let x = 402; x < 578; x += 3) L(x, x > 484 ? 258 : 248, x, x > 484 ? 364 : 313, '#ededed', .6);

/* axes */
const gx = { A: 336.5, B: 398.5, C: 501.5, D: 581.5 }, gy = { 1: 210, 2: 282.5, 3: 316, 4: 368 };
L(266.5, 190, 266.5, 389, '#555', .6, '8 2 1 2');
const bubble = (x, y, s) => { L(x - 8, y, x + 8, y); L(x, y - 8, x, y + 8); out.push(`<circle cx="${x}" cy="${y}" r="5" fill="#fff" stroke="#444" stroke-width="1.2"/>`); t(x, y + 2, s, 6); };
for (const k in gx) { L(gx[k], 188, gx[k], 389, '#555', .6, '8 2 1 2'); bubble(gx[k], 181, k); bubble(gx[k], 395.5, k); }
for (const k in gy) { L(241, gy[k], 607, gy[k], '#777', .6, '8 2 1 2'); bubble(234, gy[k], k); bubble(614, gy[k], k); }

/* dimensions */
[191.5, 200.5, 379.5, 387.5].forEach(y => { L(264, y, 584, y); [266.5, 581.5].forEach(x => L(x, y - 2, x, y + 2, '#222')); });
[336.5, 398.5, 501.5].forEach(x => [200.5, 379.5].forEach(y => L(x, y - 2, x, y + 2, '#111', 1)));
L(316.5, 198, 316.5, 203, '#111', 1);
[249.5, 258.5, 594.5, 602.5].forEach(x => { L(x, 208, x, 370); [210, 368].forEach(y => L(x - 2, y, x + 2, y, '#222')); });
[[290, 198, '7000'], [326, 198, '1700'], [367, 198, '7400'], [449, 198, '6900'], [541, 198, '5100'], [423, 189, '20000'], [301, 377, '7000'], [367, 377, '7400'], [449, 377, '6900'], [541, 377, '5100'], [423, 385, '20000']].forEach(a => t(a[0], a[1], a[2], 4, '#111', bold));
[256, 592].forEach(x => { v(x, 246, '4900'); v(x, 299, '2100'); v(x, 342, '3500'); });
v(248, 289, '10000'); v(600, 289, '10000');

/* hatched louvers */
R(316.5, 210.5, 335.5, 314, '#222', 1);
for (let y = 213.5; y < 313; y += 3) { L(317, y, 335, y, '#111', 1.500); if (y > 253 && y < 296) L(317, y + 1.500, 335, y + 1.500, '#888', 1.500); }
R(336.5, 285.5, 394.5, 314, '#222', 1);
for (let x = 339.5; x < 394; x += 3) { L(x, 286, x, 314, '#222', 1.500); if (x < 352 || x > 376) L(x + 1.500, 286, x + 1.500, 314, '#999', 1.500); }
R(396.5, 318.5, 480.5, 330.5, '#111', 1.200);
for (let x = 399.5; x < 480; x += 3) { L(x, 319, x, 330, '#222', 1.500); if (x < 412 || (x > 424 && x < 443) || x > 466) L(x + 1.500, 319, x + 1.500, 330, '#888', 1.500); }

/* walls */
L(316.5, 210.5, 581.5, 210.5, '#555'); L(394.5, 210, 394.5, 314, '#333'); L(400.5, 213.5, 400.5, 314);
L(400.5, 213.5, 578.5, 213.5, '#333'); L(578.5, 213.5, 578.5, 365, '#333', .9); L(581.5, 213, 581.5, 368, '#777', 1.200);
L(484.5, 365.5, 578.5, 365.5, '#333'); L(480.5, 368.5, 582, 368.5, '#222', 1);
L(480.5, 318, 480.5, 368, '#333'); L(484.5, 314.5, 484.5, 365, '#333'); L(316, 314.5, 484.5, 314.5, '#333');
R(412.5, 225.5, 486.5, 240.5, '#444', 1.200); R(415.5, 228.5, 483.5, 238.5, '#666', .8, '#f4f4f4');
L(397, 246.5, 500, 246.5, '#222'); L(495.5, 213, 495.5, 247, '#222', 1.600); L(493, 213, 493, 247);
R(500.5, 213.5, 560.5, 247.5, '#444', .7, '#fafafa'); L(560.5, 213, 560.5, 247, '#111', 1.300); L(553.5, 213, 553.5, 247); L(503.5, 213, 503.5, 247, '#777');
[[506, 222], [533, 236], [540, 220], [548, 232], [508, 243], [424, 236], [450, 234], [470, 236]].forEach(([x, y]) => out.push(`<path d="M${x} ${y}l7-7h3l-8 8zM${x + 4} ${y + 1}l6-6h2l-6 7z" fill="#c4c4c4"/>`));
L(556.5, 248, 556.5, 283, '#999', .6); L(407.5, 213, 407.5, 247);
L(412, 256.500, 580, 256.5); [412, 486.5, 495.5, 560.5, 579].forEach(x => L(x, 254, x, 259, '#111', 1));
t(449, 254, '1.100', 4, '#111', bold); t(490, 254, '300', 4, '#111', bold); t(528, 254, '1.100', 4, '#111', bold); t(569, 254, '1100', 4, '#111', bold); t(449, 244, '350', 4, '#111', bold);
v(406, 218, '150'); v(406, 232, '1000'); v(491, 230, '2150');
t(451, 235, 'MÁI KÍNH LẤY SÁNG', 3); t(528, 223, 'MÁI KÍNH LẤY SÁNG', 3); t(529, 267.500, 'KHU VỰC ĐẶT BỒN NƯỚC MÁI', 3); t(475, 281, 'MÁI TÔN', 3);
t(528, 272, '+7.950', 4); t(365, 248, '+7.450', 4);
out.push('<path d="M363 248h4l-2 2zM527 272h3l-1.500 2z" fill="#111"/>');

/* callouts and section cuts */
const red = '#c0545a', dash = '4 2';
L(237, 224.5, 612, 224.5, red, .9, dash); L(240, 303.5, 622, 303.5, red, .9, dash);
L(413.5, 183, 413.5, 395, red, .9, dash); L(514.5, 181, 514.5, 397, red, .9, dash);
[[309.5, 207.5, 403.5, 317.5], [408.5, 207.5, 563.5, 249.5], [392.5, 307.5, 489.5, 334.5]].forEach(r => R(...r, red, .9, 'none', `rx="4" stroke-dasharray="${dash}"`));
R(621, 295, 623, 304, '#000', .8, '#000'); R(413, 395, 421, 396.500, '#000', .6, '#000'); R(515, 397, 523, 398.500, '#000', .6, '#000');
const blue = '#2b5fa3';
const mark = (x, y, tri) => {
  if (tri) out.push(`<path d="${tri}" fill="#17498f"/>`);
  out.push(`<circle cx="${x}" cy="${y}" r="5.500" fill="#fff" stroke="${blue}" stroke-width=".9"/>`);
  L(x - 5.5, y, x + 5.5, y, blue, .8); t(x, y - 1, '1', 3, blue); t(x, y + 3.5, 'A2001', 3, blue);
};
L(358.5, 186, 358.5, 208, '#222'); L(468.5, 184, 468.5, 208, '#222'); L(442.5, 335, 442.5, 346, '#222');
mark(358.5, 181.5); mark(468.5, 178.5); mark(442.5, 351.5);
mark(413.5, 175.5, 'M413.500 167l9 8.500-9 8.500z'); mark(515, 173.500, 'M515 165l9 8.500-9 8.500z');
mark(228, 224.5, 'M219.500 224.500h17l-8.500 8.500z'); mark(620.5, 224.5, 'M612 224.500h17l-8.500 8.500z');
mark(232, 303, 'M223.500 303h17l-8.500-8.500z');
out.push(`<circle cx="260" cy="413" r="4.500" stroke="${red}" stroke-width=".9"/>`);
t(260, 415, '1', 6, '#111', bold); t(296.500, 412, 'MẶT BẰNG TẦNG MÁI', 6, '#111', bold); L(266, 413.5, 327, 413.5, '#111', .8); t(271, 418, '1 : 75', 4);
$('plan').innerHTML = out.join('');
</script>
</body>
</html>
